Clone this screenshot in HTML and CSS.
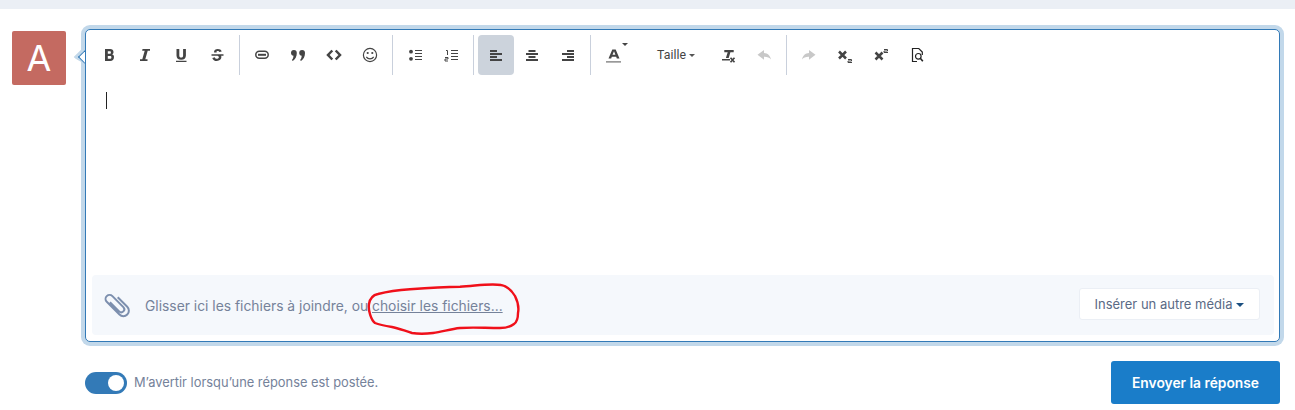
FILE: index.html
```html
<!DOCTYPE html>
<html lang="fr">
<head>
<meta charset="utf-8">
<title>Répondre</title>
<link rel="stylesheet" href="styles.css">
</head>
<body>
<div class="band"></div>
<main class="reply">
  <div class="avatar">A</div>
  <div class="content">
    <div class="editor">
      <span class="notch"></span>
      <div class="toolbar">
        <div class="group">
          <button class="tb"><svg viewBox="0 0 16 16"><path class="f" fill-rule="evenodd" d="M4 2h5.200c2 0 3.300 1.100 3.300 2.900 0 1.100-.5 1.900-1.400 2.400 1.300.4 1.900 1.400 1.900 2.700 0 2.400-1.500 4-3.800 4H4zm2.800 2.300v2.500h2c.8 0 1.100-.5 1.100-1.250S9.600 4.300 8.800 4.300zm0 4.800v2.600h2.300c.9 0 1.300-.6 1.300-1.300 0-.8-.4-1.300-1.300-1.300z"/></svg></button>
          <button class="tb"><svg viewBox="0 0 16 16"><path class="f" d="M5.500 2H13v1.700h-2.300L8.300 12.300h2.200V14H3v-1.700h2.300L7.700 3.700H5.200z"/></svg></button>
          <button class="tb"><svg viewBox="0 0 16 16"><path class="f" d="M3.500 2h2.800v6.500c0 1.400.6 2.100 1.900 2.100s1.900-.7 1.900-2.100V2h2.800v6.500c0 2.800-1.700 4.300-4.700 4.300S3.500 11.300 3.500 8.500zM3 13.800h10.500v1.300H3z"/></svg></button>
          <button class="tb"><svg viewBox="0 0 16 16"><path class="f" d="M5 5c0-1.900 1.700-3 3.800-3 1.900 0 3.300.7 3.900 2.400l-2.400.7C10 4.300 9.500 4 8.800 4c-.9 0-1.300.3-1.300.8 0 .3.100.5.400.7H5.300C5.100 5.300 5 5.200 5 5zM2.500 7.300h12v1.400h-2.400c.2.400.3.900.3 1.400 0 2.300-1.800 3.900-4.600 3.900-2.200 0-4-1-4.500-3.100l2.500-.7c.3 1 1 1.600 2.100 1.600 1.200 0 2-.6 2-1.500 0-.8-.5-1.200-1.500-1.600H2.500z"/></svg></button>
        </div>
        <div class="group">
          <button class="tb"><svg viewBox="0 0 16 16"><rect class="s" stroke-width="1.500" x="1.800" y="4.300" width="12.400" height="7" rx="3.500"/><path class="s" stroke-width="2" d="M4 7.800h8"/></svg></button>
          <button class="tb"><svg viewBox="0 0 16 16"><path class="f" d="M1 6a2.900 2.900 0 1 1 5.800 0c0 3.400-1.500 6.400-4 8l-.9-.9c.9-1 1.400-2 1.600-4.300C2.100 8.700 1 7.500 1 6zm8.200 0a2.900 2.900 0 1 1 5.800 0c0 3.400-1.500 6.400-4 8l-.9-.9c.9-1 1.400-2 1.600-4.300-1.400-.1-2.500-1.300-2.500-2.800z"/></svg></button>
          <button class="tb"><svg viewBox="0 0 16 16"><path class="s" stroke-width="2.500" d="M6.300 3.500 2 8l4.300 4.500M9.700 3.500 14 8l-4.300 4.500"/></svg></button>
          <button class="tb"><svg viewBox="0 0 16 16"><circle class="s" stroke-width="1.200" cx="8" cy="8" r="6.600"/><circle class="f" cx="5.700" cy="6" r="1.100"/><circle class="f" cx="10.300" cy="6" r="1.100"/><path class="s" stroke-width="1.200" d="M4.300 9.800c1 1.500 2.200 2 3.700 2s2.700-.5 3.700-2"/></svg></button>
        </div>
        <div class="group">
          <button class="tb"><svg viewBox="0 0 16 16"><circle class="f" cx="4" cy="4.700" r="1.900"/><circle class="f" cx="4" cy="11.800" r="1.900"/><path class="s" d="M8 3.500h7M8 6.500h7M8 9.500h7M8 12.500h7"/></svg></button>
          <button class="tb"><svg viewBox="0 0 16 16"><path class="s" d="M3 3.500h1.500V8M2 10.500h3v1.500H2v2h3"/><path class="s" d="M8 3.500h7M8 6.500h7M8 9.500h7M8 12.500h7"/></svg></button>
        </div>
        <div class="group">
          <button class="tb active"><svg viewBox="0 0 16 16"><path class="s" stroke-width="2" d="M2 4h7M2 7h12M2 10h7M2 13h12"/></svg></button>
          <button class="tb"><svg viewBox="0 0 16 16"><path class="s" stroke-width="2" d="M4.500 4h7M2 7h12M4.500 10h7M2 13h12"/></svg></button>
          <button class="tb"><svg viewBox="0 0 16 16"><path class="s" stroke-width="2" d="M7 4h7M2 7h12M7 10h7M2 13h12"/></svg></button>
        </div>
        <div class="group">
          <button class="tb"><svg viewBox="0 0 16 16"><path class="f" fill-rule="evenodd" d="M7.300 2.500h3.400l3.800 9h-2.700l-.6-1.700H6.800l-.6 1.700H3.500zm.2 5.300h2.900L9 4.300z"/><path class="under" d="M1 14h15v1.700H1z"/></svg><span class="mini-caret"></span></button>
          <button class="size">Taille<span class="caret"></span></button>
          <button class="tb"><svg viewBox="0 0 16 16"><path class="f" d="M4.300 3h9.400v2.200h-3.300L8.700 11H5.900L7.700 5.200H4.300zM2 12h8v1.500H2z"/><path class="s" stroke-width="1.700" d="m10.500 10.800 4 4.400M14.500 10.800l-4 4.400"/></svg></button>
          <button class="tb off"><svg viewBox="0 0 16 16"><path class="f" d="M8 3v3c3.800.2 6 2.300 7 6.500-1.500-2-3.700-2.900-7-2.800v3L1.500 7.800z"/></svg></button>
        </div>
        <div class="group last">
          <button class="tb off"><svg viewBox="0 0 16 16"><path class="f" d="M8 3v3c-3.800.2-6 2.300-7 6.500 1.500-2 3.700-2.900 7-2.800v3l6.500-4.900z"/></svg></button>
          <button class="tb"><svg viewBox="0 0 16 16"><path class="s" stroke-width="2.500" d="m2 4.500 7 7M9 4.500l-7 7"/><path class="s" d="M11 12.500h3.500v1.500H11v1.500h4"/></svg></button>
          <button class="tb"><svg viewBox="0 0 16 16"><path class="s" stroke-width="2.500" d="m2.500 5.500 7 7M9.500 5.500l-7 7"/><path class="s" d="M11 2.500h3.500V4H11v1.500h4"/></svg></button>
          <button class="tb"><svg viewBox="0 0 16 16"><path class="k" stroke-width="1.200" d="M8 14.500H3.500V1.500h6.300l3.500 3.500v3"/><circle class="k" stroke-width="1.200" cx="9.300" cy="9.300" r="2.800"/><path class="k" stroke-width="1.600" d="m11.300 11.300 2.500 3"/></svg></button>
        </div>
      </div>
      <div class="body"><span class="cursor"></span></div>
      <div class="drop">
        <svg class="clip" viewBox="0 0 26 26"><path transform="rotate(-45 13 13)" d="M10 6v13a3 3 0 0 0 6 0V3.500a4 4 0 0 0-8 0v18a5.500 5.500 0 0 0 11 0V8"/></svg>
        <p class="hint">Glisser ici les fichiers à joindre, ou <a class="pick">choisir les fichiers...</a></p>
        <button class="media">Insérer un autre média<span class="media-caret"></span></button>
      </div>
    </div>
    <div class="foot">
      <label class="notify"><span class="switch"><span class="knob"></span></span>M’avertir lorsqu’une réponse est postée.</label>
      <button class="send">Envoyer la réponse</button>
    </div>
  </div>
  <svg class="scribble" viewBox="0 0 170 60"><path d="M9 24C10 18 13 15 18 14 30 11 40 10 50 9.300 68 8 85 7 100 6.700 115 6 130 3 141 5 148 6 152 11 155 16 158 22 159 28 158 33 158 38 157 42 154 44 150 47 146 48 140 48 125 48 112 47 100 48 90 49 82 52 73 53 65 54 58 54 52 53 45 51 38 48 32 47 26 46 20 45 15 43 11 40 8 30 9 24z"/></svg>
</main>
</body>
</html>
```
FILE: styles.css
```css
* { box-sizing: border-box; }
html, body { margin: 0; padding: 0; }
body {
  width: 1295px;
  height: 410px;
  overflow: hidden;
  background: #fff;
  font-family: Inter, "Liberation Sans", sans-serif;
  color: #75829a;
}
button { font-family: inherit; border: 0; background: none; padding: 0; }
.band { height: 9px; background: #ebeff5; }
.reply {
  position: relative;
  display: flex;
  align-items: flex-start;
  gap: 19px;
  padding: 20px 15px 0 12px;
}
.avatar {
  flex: none;
  width: 54px;
  height: 54px;
  margin-top: 2px;
  border-radius: 2px;
  background: #c46a61;
  color: #fff;
  font-size: 36px;
  line-height: 54px;
  text-align: center;
}
.content { flex: 1; min-width: 0; }
.editor {
  position: relative;
  height: 313px;
  border: 1px solid #337ab7;
  border-radius: 5px;
  box-shadow: 0 0 0 4px #c2d8ea;
  background: #fff;
}
.notch {
  position: absolute;
  left: -6px;
  top: 22px;
  width: 10px;
  height: 10px;
  transform: rotate(45deg);
  background: #fff;
  border-left: 1px solid #337ab7;
  border-bottom: 1px solid #337ab7;
  box-shadow: -3px 3px 0 #c2d8ea;
  clip-path: polygon(-40% -40%, 100% 100%, -40% 140%);
}
.toolbar {
  display: flex;
  align-items: stretch;
  height: 40px;
  margin-top: 5px;
  padding-left: 5px;
}
.group {
  display: flex;
  height: 40px;
  padding-right: 4px;
  margin-right: 4px;
  border-right: 1px solid #c9d0dc;
}
.group.last { border-right: 0; }
.tb {
  flex: none;
  display: flex;
  align-items: center;
  justify-content: center;
  position: relative;
  width: 36px;
  height: 40px;
  border-radius: 4px;
}
.tb svg { width: 16px; height: 16px; }
.f { fill: #444; }
.s { fill: none; stroke: #444; }
.k { fill: none; stroke: #222; }
.under { fill: #999; }
.tb.off .f { fill: #c8c8c8; }
.tb.active { background: #ccd3dc; }
.mini-caret {
  position: absolute;
  right: 3px;
  top: 8px;
  border: 3px solid transparent;
  border-top: 3px solid #444;
  border-bottom: 0;
}
.size {
  flex: none;
  width: 79px;
  height: 40px;
  padding-left: 11px;
  font-family: Roboto, sans-serif;
  font-size: 12.300px;
  color: #444;
  text-align: center;
}
.caret {
  display: inline-block;
  margin-left: 3px;
  vertical-align: middle;
  border: 3px solid transparent;
  border-top: 3px solid #555;
  border-bottom: 0;
}
.body { height: 200px; padding: 17px 0 0 20px; }
.cursor { display: block; width: 1px; height: 17px; background: #222; }
.drop {
  display: flex;
  align-items: center;
  height: 60px;
  margin: 0 5px 0 6px;
  padding: 0 14px 0 12px;
  border-radius: 4px;
  background: #f5f8fc;
}
.clip { flex: none; width: 26px; height: 26px; margin-top: -1px; }
.clip path { fill: none; stroke: #7c8fae; stroke-width: 2; }
.hint { flex: 1; margin: 2px 0 0 15px; font-size: 13.850px; line-height: 20px; white-space: pre; }
.pick { text-decoration: underline; }
.media {
  flex: none;
  width: 181px;
  height: 32px;
  margin-top: -2px;
  border: 1px solid #ebeff5;
  border-radius: 3px;
  background: #fff;
  font-size: 13px;
  color: #5a6a85;
}
.media-caret {
  display: inline-block;
  margin-left: 4px;
  vertical-align: 2px;
  border: 4px solid transparent;
  border-top: 4px solid #1b4f80;
  border-bottom: 0;
}
.foot {
  display: flex;
  align-items: center;
  justify-content: space-between;
  margin-top: 19px;
}
.notify { display: flex; align-items: center; gap: 7px; font-size: 12.870px; }
.switch {
  display: block;
  position: relative;
  width: 42px;
  height: 22px;
  border-radius: 11px;
  background: #337ab7;
}
.knob {
  position: absolute;
  right: 3px;
  top: 3px;
  width: 16px;
  height: 16px;
  border-radius: 50%;
  background: #fff;
}
.send {
  width: 169px;
  height: 43px;
  border-radius: 3px;
  background: #1a7dc9;
  color: #fff;
  font-size: 13.800px;
  font-weight: 600;
}
.scribble {
  position: absolute;
  left: 360px;
  top: 271px;
  width: 170px;
  height: 60px;
  overflow: visible;
}
.scribble path { fill: none; stroke: #f0101a; stroke-width: 2.400; }
```
